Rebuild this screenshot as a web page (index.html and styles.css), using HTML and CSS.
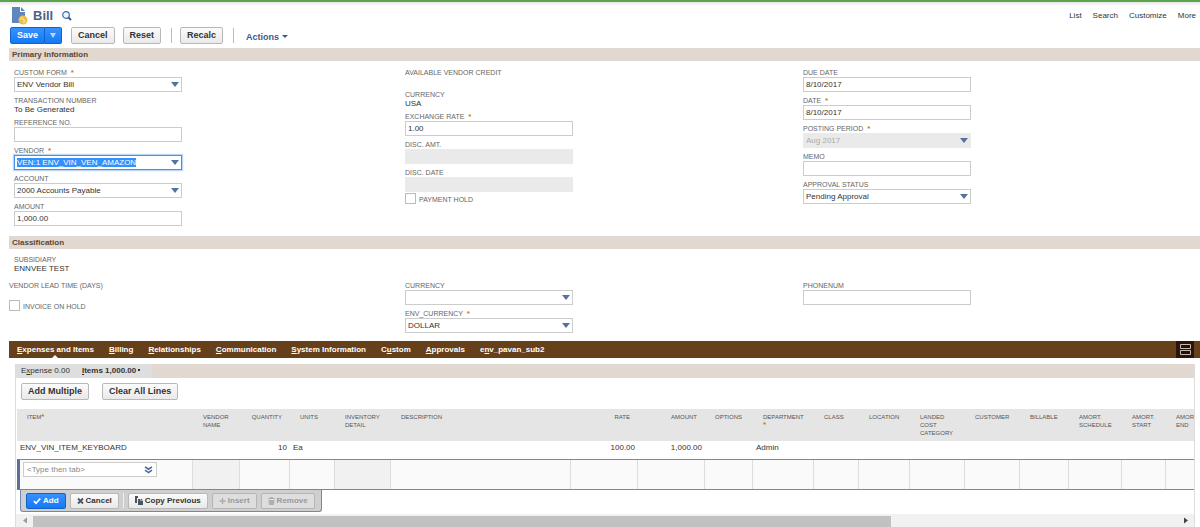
FILE: index.html
```
<!DOCTYPE html>
<html lang="en">
<head>
  <meta charset="utf-8">
  <title>Bill</title>
  <link rel="stylesheet" href="styles.css">
</head>
<body>
<header class="page-header">
  <div class="title-row">
    <svg class="doc-icon" width="16" height="18" viewBox="0 0 16 18">
      <path d="M0 0h8v5h5v11H0z" fill="#5f87bf"/>
      <path d="M9 0l4 4H9z" fill="#5f87bf"/>
      <circle cx="11" cy="13" r="4.500" fill="#f0bd45"/>
      <path d="M8.500 12.500c0-2 2.500-2 2.500-.5s2.500 1 2 2.500-2 1-2 0" fill="none" stroke="#fff3cf"/>
    </svg>
    <h1>Bill</h1>
    <svg class="search-icon" width="10" height="10" viewBox="0 0 10 10">
      <circle cx="4" cy="4" r="3.300" fill="#eef5fb" stroke="#3f6ea8" stroke-width="1.200"/>
      <path d="M6.500 6.500L9 9" stroke="#2f568f" stroke-width="1.800"/>
    </svg>
    <nav class="page-links">
      <a href="#">List</a>
      <a href="#">Search</a>
      <a href="#">Customize</a>
      <a href="#">More</a>
    </nav>
  </div>
  <div class="button-row">
    <div class="split">
      <button class="btn primary" type="button">Save</button>
      <button class="btn primary drop" type="button" aria-label="Save options"><span class="arrow light"></span></button>
    </div>
    <button class="btn" type="button">Cancel</button>
    <button class="btn" type="button">Reset</button>
    <span class="divider"></span>
    <button class="btn" type="button">Recalc</button>
    <span class="divider"></span>
    <a class="actions" href="#">Actions <span class="arrow small"></span></a>
  </div>
</header>

<main>
  <h2 class="section-title">Primary Information</h2>
  <div class="fields primary-info">
    <div class="column inset">
      <div class="field">
        <label for="custom-form">CUSTOM FORM <b>*</b></label>
        <span class="select"><select id="custom-form"><option>ENV Vendor Bill</option></select></span>
      </div>
      <div class="field">
        <span class="label">TRANSACTION NUMBER</span>
        <span class="value">To Be Generated</span>
      </div>
      <div class="field">
        <label for="reference">REFERENCE NO.</label>
        <input type="text" id="reference">
      </div>
      <div class="field">
        <label for="vendor">VENDOR <b>*</b></label>
        <span class="select"><input type="text" id="vendor" value="VEN:1 ENV_VIN_VEN_AMAZON"></span>
      </div>
      <div class="field">
        <label for="account">ACCOUNT</label>
        <span class="select"><select id="account"><option>2000 Accounts Payable</option></select></span>
      </div>
      <div class="field">
        <label for="amount">AMOUNT</label>
        <input type="text" id="amount" value="1,000.00">
      </div>
    </div>
    <div class="column">
      <div class="field">
        <span class="label">AVAILABLE VENDOR CREDIT</span>
        <span class="value"></span>
      </div>
      <div class="field">
        <span class="label">CURRENCY</span>
        <span class="value">USA</span>
      </div>
      <div class="field">
        <label for="rate">EXCHANGE RATE <b>*</b></label>
        <input type="text" id="rate" value="1.00">
      </div>
      <div class="field">
        <label for="disc-amt">DISC. AMT.</label>
        <input type="text" id="disc-amt" disabled>
      </div>
      <div class="field">
        <label for="disc-date">DISC. DATE</label>
        <input type="text" id="disc-date" disabled>
      </div>
      <div class="check">
        <input type="checkbox" id="payment-hold">
        <label for="payment-hold">PAYMENT HOLD</label>
      </div>
    </div>
    <div class="column">
      <div class="field">
        <label for="due-date">DUE DATE</label>
        <input type="text" id="due-date" value="8/10/2017">
      </div>
      <div class="field">
        <label for="date">DATE <b>*</b></label>
        <input type="text" id="date" value="8/10/2017">
      </div>
      <div class="field">
        <label for="period">POSTING PERIOD <b>*</b></label>
        <span class="select"><select id="period" disabled><option>Aug 2017</option></select></span>
      </div>
      <div class="field">
        <label for="memo">MEMO</label>
        <input type="text" id="memo">
      </div>
      <div class="field">
        <label for="status">APPROVAL STATUS</label>
        <span class="select"><select id="status"><option>Pending Approval</option></select></span>
      </div>
    </div>
  </div>

  <h2 class="section-title">Classification</h2>
  <div class="fields classification">
    <div class="field inset subsidiary">
      <span class="label">SUBSIDIARY</span>
      <span class="value">ENNVEE TEST</span>
    </div>
    <div class="column">
      <div class="field">
        <span class="label">VENDOR LEAD TIME (DAYS)</span>
        <span class="value"></span>
      </div>
      <div class="check">
        <input type="checkbox" id="invoice-hold">
        <label for="invoice-hold">INVOICE ON HOLD</label>
      </div>
    </div>
    <div class="column">
      <div class="field">
        <label for="currency">CURRENCY</label>
        <span class="select"><select id="currency"><option></option></select></span>
      </div>
      <div class="field">
        <label for="env-currency">ENV_CURRENCY <b>*</b></label>
        <span class="select"><select id="env-currency"><option>DOLLAR</option></select></span>
      </div>
    </div>
    <div class="column">
      <div class="field">
        <label for="phonenum">PHONENUM</label>
        <input type="text" id="phonenum">
      </div>
    </div>
  </div>

  <nav class="tabs">
    <a class="active" href="#"><u>E</u>xpenses and Items</a>
    <a href="#"><u>B</u>illing</a>
    <a href="#"><u>R</u>elationships</a>
    <a href="#"><u>C</u>ommunication</a>
    <a href="#"><u>S</u>ystem Information</a>
    <a href="#">C<u>u</u>stom</a>
    <a href="#"><u>A</u>pprovals</a>
    <a href="#">e<u>n</u>v_pavan_sub2</a>
    <button class="layout-toggle" type="button" aria-label="Tab layout">
      <svg width="11" height="11" viewBox="0 0 11 11">
        <path d="M.5 .5h10v4H.5zM.5 6.500h10v4H.5z" fill="#241008" stroke="#c3bab2"/>
      </svg>
    </button>
  </nav>

  <section class="panel">
    <div class="subtabs">
      <nav>
        <a href="#">E<u>x</u>pense 0.00</a>
        <a class="active" href="#"><u>I</u>tems 1,000.00 <i></i></a>
      </nav>
    </div>
    <div class="panel-buttons">
      <button class="btn" type="button">Add Multiple</button>
      <button class="btn" type="button">Clear All Lines</button>
    </div>
    <div class="table-wrap">
      <table>
        <colgroup>
          <col class="w-item"><col class="w-vendor"><col class="w-qty"><col class="w-units"><col class="w-inv">
          <col class="w-desc"><col class="w-rate"><col class="w-rate"><col class="w-opt"><col class="w-dept">
          <col class="w-class"><col class="w-loc"><col class="w-cost"><col class="w-cost"><col class="w-bill">
          <col class="w-sched"><col class="w-start"><col class="w-start">
        </colgroup>
        <thead>
          <tr>
            <th>ITEM<b>*</b></th>
            <th>VENDOR NAME</th>
            <th class="num">QUANTITY</th>
            <th>UNITS</th>
            <th>INVENTORY DETAIL</th>
            <th>DESCRIPTION</th>
            <th class="num">RATE</th>
            <th class="num">AMOUNT</th>
            <th>OPTIONS</th>
            <th>DEPARTMENT <b>*</b></th>
            <th>CLASS</th>
            <th>LOCATION</th>
            <th>LANDED COST CATEGORY</th>
            <th>CUSTOMER</th>
            <th>BILLABLE</th>
            <th>AMORT. SCHEDULE</th>
            <th>AMORT. START</th>
            <th>AMORT. END</th>
          </tr>
        </thead>
        <tbody>
          <tr>
            <td>ENV_VIN_ITEM_KEYBOARD</td><td></td><td class="num">10</td><td>Ea</td><td></td><td></td>
            <td class="num">100.00</td><td class="num">1,000.00</td><td></td><td>Admin</td>
            <td></td><td></td><td></td><td></td><td></td><td></td><td></td><td></td>
          </tr>
          <tr class="edit">
            <td>
              <div class="item-box">
                <input type="text" placeholder="&lt;Type then tab&gt;" aria-label="Item">
                <svg width="9" height="8" viewBox="0 0 9 8">
                  <path d="M1 .8l3.500 2.400L8 .8M1 4.200l3.500 2.400L8 4.200" fill="none" stroke="#4d6a95" stroke-width="1.600"/>
                </svg>
              </div>
            </td>
            <td class="locked"></td><td></td><td></td><td class="locked"></td><td></td>
            <td></td><td></td><td></td><td></td><td></td><td></td><td></td><td></td><td></td><td></td><td></td><td></td>
          </tr>
        </tbody>
      </table>
    </div>
    <div class="line-buttons">
      <button class="btn primary" type="button">
        <svg width="8" height="8" viewBox="0 0 8 8"><path d="M.8 4l2.200 2.200L7.300 1.500" fill="none" stroke="#fff" stroke-width="1.700"/></svg>
        Add
      </button>
      <button class="btn" type="button">
        <svg width="7" height="8" viewBox="0 0 7 8"><path d="M1 1.500l5 5M6 1.500l-5 5" stroke="#4a5463" stroke-width="1.800"/></svg>
        Cancel
      </button>
      <span class="divider"></span>
      <button class="btn" type="button">
        <svg width="8" height="9" viewBox="0 0 8 9"><path d="M0 0h3v2H2v5H0z" fill="#4a5463"/><path d="M3 3h2.500v2H8v4H3zM6 2.500l2 2H6z" fill="#4a5463"/></svg>
        Copy Previous
      </button>
      <button class="btn" type="button" disabled>
        <svg width="7" height="8" viewBox="0 0 7 8"><path d="M3.500 1v6M.5 4h6" stroke="#aaa" stroke-width="1.300"/></svg>
        Insert
      </button>
      <button class="btn" type="button" disabled>
        <svg width="7" height="8" viewBox="0 0 7 8"><path d="M0 1h2V0h3v1h2v1H0zM.5 3h6L6 8H1z" fill="#b0b0b0"/></svg>
        Remove
      </button>
    </div>
    <div class="scrollbar">
      <svg width="17" height="13" viewBox="0 0 17 13"><path d="M11 3.500v6l-4-3z" fill="#999"/></svg>
      <div class="track"><div class="thumb"></div></div>
      <svg width="17" height="13" viewBox="0 0 17 13"><path d="M7 3.500v6l4-3z" fill="#444"/></svg>
    </div>
  </section>
</main>
<script>
  document.getElementById("vendor").select();
</script>
</body>
</html>
```
FILE: styles.css
```
* {
  box-sizing: border-box;
}

body {
  margin: 0;
  background: #fff;
  color: #333;
  font-family: "Liberation Sans", Arial, sans-serif;
  font-size: 8px;
  line-height: 9px;
  overflow-x: hidden;
}

a {
  color: inherit;
  text-decoration: none;
}

input,
select,
button {
  margin: 0;
  font-family: inherit;
  font-size: 8px;
}

/* header */
.page-header {
  border-top: 2px solid #5aa44e;
  background: linear-gradient(#e6e6e6, #fff 4px);
  padding: 4px 4px 4px 10px;
}

.title-row {
  display: flex;
  align-items: center;
  height: 19px;
  margin-bottom: 2px;
}

.title-row h1 {
  margin: 0 9px 0 5px;
  color: #4d5f86;
  font-size: 13px;
  line-height: 18px;
}

.doc-icon {
  margin-left: 2px;
}

.page-links {
  display: flex;
  gap: 11px;
  margin-left: auto;
}

.button-row {
  display: flex;
  align-items: center;
}

.btn {
  height: 17px;
  padding: 0 6px;
  border: 1px solid #b8b8b8;
  border-radius: 2px;
  background: linear-gradient(#fbfbfb, #e9e9e9);
  color: #333;
  font-size: 9px;
  font-weight: bold;
  line-height: 13px;
  white-space: nowrap;
}

.btn.primary {
  border-color: #0f62d0;
  background: linear-gradient(#3791ff, #147af3);
  color: #fff;
}

.split {
  display: flex;
  margin-right: 9px;
}

.split .btn {
  border-radius: 2px 0 0 2px;
}

.split .drop {
  width: 17px;
  padding: 0 4px;
  border-left: 0;
  border-radius: 0 2px 2px 0;
}

.button-row > .btn {
  margin-right: 8px;
}

.divider {
  width: 1px;
  height: 15px;
  margin: 0 8px 0 2px;
  background: #bbb;
}

.arrow {
  display: inline-block;
  border: 4px solid transparent;
  border-top: 4px solid #55729f;
  border-bottom: 0;
}

.arrow.light {
  border-width: 5px 3px 0;
  border-top-color: #b9d8ff;
}

.arrow.small {
  border-width: 3px 3px 0;
  border-top-color: #3c5a8c;
  vertical-align: 2px;
}

.actions {
  margin: 4px 0 0 4px;
  color: #3c5a8c;
  font-size: 9px;
  font-weight: bold;
}

/* form sections */
.section-title {
  margin: 0 0 0 9px;
  padding: 0 3px;
  background: #e0d8d1;
  color: #5a4636;
  font-size: 8px;
  line-height: 13px;
}

.fields {
  display: grid;
  grid-template-columns: 396fr 398fr 397fr;
  margin-left: 9px;
}

.primary-info {
  padding: 7px 0 10px;
}

.classification {
  padding: 6px 0 8px;
}

.subsidiary {
  grid-column: 1 / -1;
  margin-bottom: 8px;
}

.inset {
  padding-left: 5px;
}

.column {
  display: flex;
  flex-direction: column;
  gap: 4px;
}

.field label,
.label,
.value {
  display: block;
  height: 9px;
}

label,
.label {
  color: #666;
  font-size: 7px;
}

label b,
th b {
  color: #c77a1c;
  font-size: 8px;
}

label b {
  margin-left: 2px;
}

.field input,
.field select {
  display: block;
  width: 168px;
  height: 15px;
  padding: 0 2px;
  border: 1px solid #ccc;
  border-radius: 0;
  background: #fff;
  color: #333;
  appearance: none;
  outline: 0;
}

.field input:disabled,
.field select:disabled {
  border-color: #eaeaea;
  background: #eaeaea;
  color: #aaa;
  opacity: 1;
}

.field input:focus {
  border-color: #4a90e2;
  box-shadow: 0 0 1px 1px #b9d7f7;
}

.field input::selection {
  background: #3390ff;
  color: #fff;
}

.select {
  display: block;
  position: relative;
  width: 168px;
}

.select::after {
  content: "";
  position: absolute;
  top: 5px;
  right: 3px;
  border: 4px solid transparent;
  border-top: 5px solid #55729f;
  border-bottom: 0;
}

.check {
  display: flex;
  align-items: flex-end;
  gap: 3px;
  margin-top: -3px;
}

.check input {
  width: 11px;
  height: 11px;
  border: 1px solid #bbb;
  background: #fff;
  appearance: none;
}

.check label {
  line-height: 8px;
}

/* tabs */
.tabs {
  display: flex;
  align-items: center;
  gap: 15px;
  height: 17px;
  margin-left: 9px;
  padding: 0 6px 0 8px;
  background: #66401a;
  color: #fff;
  font-weight: bold;
}

.tabs a {
  position: relative;
}

.tabs .active::after {
  content: "";
  position: absolute;
  top: 10px;
  left: 50%;
  margin-left: -4px;
  border: 4px solid transparent;
  border-bottom-color: #fff;
  border-top: 0;
}

.layout-toggle {
  display: flex;
  align-items: center;
  justify-content: center;
  width: 18px;
  height: 17px;
  margin-left: auto;
  padding: 0;
  border: 0;
  background: #2c130b;
}

.panel {
  margin: 6px 5px 0 15px;
  border: 1px solid #ddd;
  border-width: 0 1px;
}

.subtabs {
  background: #e0d8d1;
}

.subtabs nav {
  display: flex;
  gap: 12px;
  width: 136px;
  padding: 0 5px;
  background: #dedede;
  line-height: 14px;
}

.subtabs .active {
  font-weight: bold;
}

.subtabs i {
  display: inline-block;
  width: 2px;
  height: 2px;
  background: #333;
  vertical-align: 2px;
}

.panel-buttons {
  display: flex;
  gap: 13px;
  padding: 5px 5px 9px;
}

/* item lines */
.table-wrap {
  margin-left: 1px;
  overflow: hidden;
}

table {
  width: 1193px;
  border-collapse: separate;
  border-spacing: 0;
  table-layout: fixed;
}

.w-item { width: 176px; }
.w-vendor { width: 47px; }
.w-qty { width: 50px; }
.w-units { width: 45px; }
.w-inv { width: 56px; }
.w-desc { width: 180px; }
.w-rate { width: 67px; }
.w-opt { width: 48px; }
.w-dept { width: 61px; }
.w-class { width: 45px; }
.w-loc { width: 51px; }
.w-cost { width: 55px; }
.w-bill { width: 49px; }
.w-sched { width: 53px; }
.w-start { width: 44px; }

th {
  height: 32px;
  padding: 4px 8px 0 10px;
  background: #e5e5e5;
  color: #555;
  font-size: 6px;
  font-weight: normal;
  line-height: 8px;
  text-align: left;
  vertical-align: top;
}

td {
  height: 18px;
  padding: 2px 3px;
  vertical-align: top;
}

.num {
  text-align: right;
}

th.num {
  padding: 4px 8px 0 0;
}

.edit td {
  height: 31px;
  border: solid #7388ad;
  border-width: 1px 0;
  background: linear-gradient(#ddd, #ddd) right / 1px 100% no-repeat #fafafa;
}

.edit td:first-child {
  border-left: 3px solid #5a6e96;
}

.edit .locked {
  background-color: #f1f1f1;
}

.item-box {
  display: flex;
  align-items: center;
  width: 134px;
  height: 15px;
  padding: 0 3px;
  border: 1px solid #ccc;
  background: #fff;
}

.item-box input {
  flex: 1;
  min-width: 0;
  padding: 0;
  border: 0;
  background: none;
}

.item-box input::placeholder {
  color: #888;
}

.line-buttons {
  display: flex;
  align-items: center;
  gap: 4px;
  width: 302px;
  height: 22px;
  margin-left: 4px;
  padding: 0 5px;
  border: 1px solid #7388ad;
  border-top: 0;
  border-radius: 0 0 3px 3px;
  background: #cfcfcf;
}

.line-buttons .btn {
  display: flex;
  align-items: center;
  gap: 2px;
  height: 16px;
  padding: 0 6px;
  font-size: 8px;
}

.line-buttons .btn:disabled {
  border-color: #b5b5b5;
  background: #dedede;
  color: #999;
}

.line-buttons .divider {
  margin: 0;
  background: #eee;
}

.scrollbar {
  display: flex;
  height: 13px;
  margin-top: 2px;
  background: #f1f1f1;
}

.track {
  flex: 1;
  padding-top: 2px;
}

.thumb {
  width: 75%;
  height: 11px;
  background: #c1c1c1;
}
```
